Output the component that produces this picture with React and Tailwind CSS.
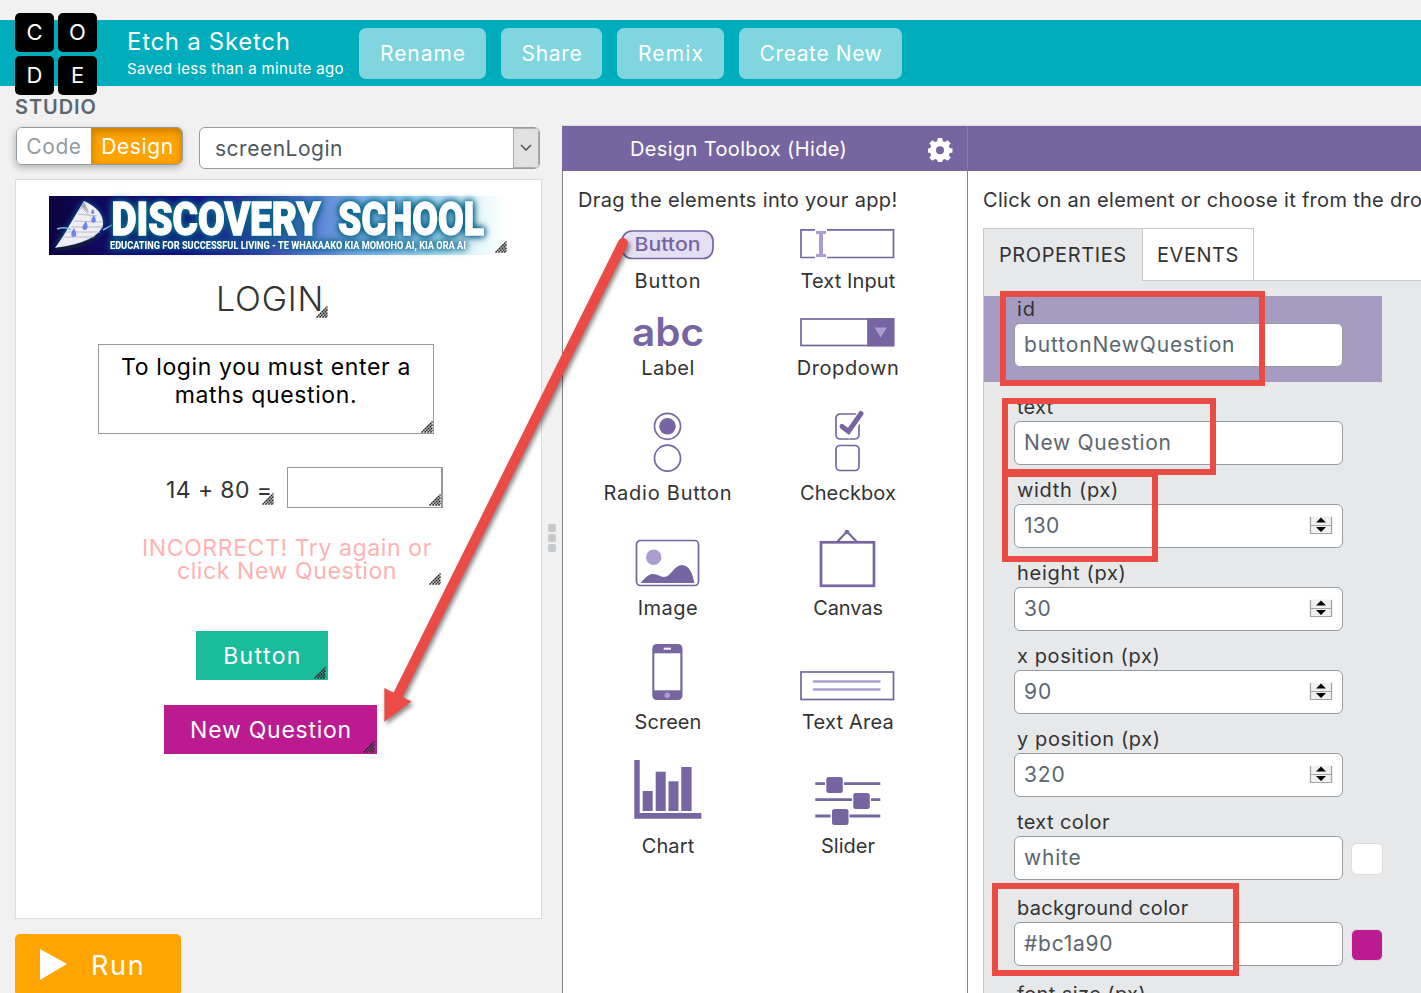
import React from "react";

const PURPLE = "#7665a0";
const LILAC = "#ab9dcf";

function Grip({ className }) {
  return (
    <svg className={"absolute " + className} width="12" height="12" viewBox="0 0 12 12">
      <path d="M12 0V12H0Z" fill="#999" opacity="0.25" />
      <path d="M0.5 11.5L11.5 0.5M3.5 11.5L11.5 3.5M6.5 11.5L11.5 6.5M9.3 11.5L11.5 9.3" stroke="#222" strokeWidth="1.5" strokeDasharray="1.9 0.5" />
    </svg>
  );
}

function Logo() {
  return (
    <div className="absolute left-[15px] top-[-7px] w-[82px]">
      <div className="grid grid-cols-2 gap-1 text-white text-[22px] leading-[39px] text-center">
        {["C", "O", "D", "E"].map((c) => (
          <div key={c} className="h-[39px] rounded-[5px] bg-black">{c}</div>
        ))}
      </div>
      <div className="mt-0.5 text-[20px] leading-5 font-semibold tracking-[0.9px] text-[#5b6770] whitespace-nowrap">STUDIO</div>
    </div>
  );
}

function HeaderButton({ className, children }) {
  return (
    <button className={"h-[51px] rounded-[7px] bg-[#80d6de] pl-px text-[21px] leading-[52px] text-white text-center whitespace-nowrap " + className}>
      {children}
    </button>
  );
}

function Header() {
  return (
    <header className="relative flex h-[66px] shrink-0 items-center gap-[15px] bg-[#00adbc] pl-[127px]">
      <Logo />
      <div className="w-[217px] pt-0.5 whitespace-nowrap text-white">
        <div className="text-[24px] leading-[30px] tracking-[0.7px]">Etch a Sketch</div>
        <div className="text-[15px] leading-6 tracking-[0.34px]">Saved less than a minute ago</div>
      </div>
      <HeaderButton className="w-[127px] tracking-[0.95px]">Rename</HeaderButton>
      <HeaderButton className="w-[101px] tracking-[0.7px]">Share</HeaderButton>
      <HeaderButton className="w-[107px] tracking-[1.1px]">Remix</HeaderButton>
      <HeaderButton className="w-[163px] tracking-[0.6px]">Create New</HeaderButton>
    </header>
  );
}

function Banner() {
  return (
    <svg className="absolute left-[33px] top-[16px] overflow-visible" width="458" height="59" viewBox="0 0 458 59">
      <defs>
        <linearGradient id="sky">
          <stop offset="0" stopColor="#0c0440" />
          <stop offset="0.14" stopColor="#120a68" />
          <stop offset="0.3" stopColor="#0f0a80" />
          <stop offset="0.45" stopColor="#3038a4" />
          <stop offset="0.58" stopColor="#5a80d4" />
          <stop offset="0.68" stopColor="#7fb4ec" />
          <stop offset="0.84" stopColor="#a5dcf2" />
          <stop offset="0.94" stopColor="#e8f8fc" />
          <stop offset="1" stopColor="#ffffff" />
        </linearGradient>
      </defs>
      <rect width="458" height="59" fill="url(#sky)" />
      <g className="drop-shadow-[0_0_3px_#0a7098]">
        <path d="M35 5Q55 14 54 29Q49 46 6 52Q16 38 20 30Z" fill="#eeeef4" />
      </g>
      <path d="M33 12L42 21M29 18L48 20M25 25L53 26M22 31L54 31M17 36L51 36M14 41L46 41" stroke="#bcbcc8" strokeWidth="1" />
      <path d="M35 5L29 17L33 11L40 17Z" fill="#a8a8b4" />
      <path d="M6 52Q36 50 51 37Q40 52 12 53.500Z" fill="#1a1a2a" />
      <path d="M8 33Q18 30 22 34M54 34L63 29" stroke="#70c0ea" strokeWidth="1.500" fill="none" />
      <path d="M25 32q-5 7-1 9q6 0 1-9M37 25q-6 7-2 9q6 0 2-9M45 19q-5 6-1 8q5-1 1-8M44 13q-3 3-1 5q4 0 1-5" fill="#6d83ee" />
      <g className="drop-shadow-[0_0_3px_#04587c]">
        <g className="drop-shadow-[0_0_3px_#0a6c94]" fill="#ffffff" stroke="#ffffff" fontFamily="Roboto, sans-serif" fontWeight="900">
          <text x="62.500" y="39" fontSize="47" strokeWidth="1.300" textLength="209" lengthAdjust="spacingAndGlyphs">DISCOVERY</text>
          <text x="289" y="39" fontSize="47" strokeWidth="1.300" textLength="146" lengthAdjust="spacingAndGlyphs">SCHOOL</text>
          <text x="61" y="53" fontSize="11" fontWeight="800" stroke="none" textLength="356" lengthAdjust="spacingAndGlyphs">EDUCATING FOR SUCCESSFUL LIVING - TE WHAKAAKO KIA MOMOHO AI, KIA ORA AI</text>
        </g>
      </g>
    </svg>
  );
}

function AppPreview() {
  return (
    <div className="relative mt-2.5 h-[740px] w-[527px] border border-[#ddd] bg-white text-[23px] whitespace-nowrap">
      <Banner />
      <Grip className="left-[479px] top-[61px]" />
      <div className="absolute left-[200px] top-[99px] text-[34px] leading-10 tracking-[0.8px] font-[350] text-[#333]">LOGIN</div>
      <Grip className="left-[300px] top-[126px]" />
      <div className="absolute left-[82px] top-[164px] h-[90px] w-[336px] border border-[#999] pt-[8px] text-center leading-7 text-black">
        <div className="tracking-[0.62px]">To login you must enter a</div>
        <div className="tracking-[0.62px]">maths question.</div>
        <Grip className="right-0 bottom-0" />
      </div>
      <div className="absolute left-[150px] top-[296px] leading-7 tracking-[0.4px] text-[#333]">14 + 80 =</div>
      <Grip className="left-[246px] top-[313px]" />
      <div className="absolute left-[271px] top-[287px] h-[41px] w-[156px] border border-r-2 border-[#999]">
        <Grip className="right-0 bottom-px" />
      </div>
      <div className="absolute left-[121px] top-[357px] w-[300px] text-center leading-[23px] text-[#ffb2b2]">
        <div className="tracking-[0.6px]">INCORRECT! Try again or</div>
        <div className="tracking-[0.6px]">click New Question</div>
      </div>
      <Grip className="left-[413px] top-[393px]" />
      <div className="absolute left-[180px] top-[451px] h-[49px] w-[132px] bg-[#1abc9c] pl-px text-center leading-[50px] tracking-[1.4px] text-white">
        Button
        <Grip className="right-0.5 bottom-px" />
      </div>
      <div className="absolute left-[148px] top-[525px] h-[49px] w-[213px] bg-[#bc1a90] pl-px text-center leading-[50px] tracking-[0.75px] text-white">
        New Question
        <Grip className="right-0.5 bottom-px" />
      </div>
    </div>
  );
}

function LeftColumn() {
  return (
    <section className="w-[542px] shrink-0 pl-[15px] pt-[41px]">
      <div className="flex h-[42px] items-start gap-4">
        <div className="ml-px flex h-[38px] w-[167px] rounded-md border border-[#949ca2] text-center text-[21px] leading-[38px] shadow-[-1px_3px_7px_rgba(0,0,0,0.25)]">
          <div className="h-9 w-[75px] rounded-l-[5px] border-r border-[#949ca2] bg-white tracking-[0.6px] text-[#949ca2]">Code</div>
          <div className="h-9 flex-1 rounded-r-[5px] bg-[#ffa400] pl-px tracking-[0.6px] text-white shadow-[inset_0_3px_8px_rgba(120,70,0,0.45)]">Design</div>
        </div>
        <div className="flex h-[42px] w-[341px] overflow-hidden rounded-md border border-[#949ca2] bg-white text-[21px] leading-[42px] tracking-[0.5px] text-[#4d575f]">
          <div className="flex-1 pl-[15px]">screenLogin</div>
          <div className="flex w-[26px] items-center justify-center border border-[#adadad] bg-[#e1e1e1]">
            <svg width="12" height="8" viewBox="0 0 12 8">
              <path d="M1 1L6 6L11 1" stroke="#444" strokeWidth="1.300" fill="none" />
            </svg>
          </div>
        </div>
      </div>
      <AppPreview />
      <div className="mt-[15px] flex h-[62px] w-[166px] items-center rounded-[5px] bg-[#ffa400] pl-6 text-[27px] tracking-[1.700px] text-white">
        <svg width="28" height="34" viewBox="0 0 28 34">
          <path d="M1 1L28 16L1 32Z" fill="#fff" />
        </svg>
        <span className="ml-6 pt-[3px]">Run</span>
      </div>
    </section>
  );
}

function Icon({ h, children }) {
  return (
    <svg className="overflow-visible" width="100" height={h} viewBox={"0 0 100 " + h} fill="none" stroke={PURPLE} strokeWidth="1.700">
      {children}
    </svg>
  );
}

const ICONS = {
  button: (
    <Icon h={40}>
      <rect x="4" y="4" width="91" height="27.500" rx="10" fill="#e5dff3" />
      <text x="16.500" y="24" fontSize="18.500" fontWeight="500" fill={PURPLE} stroke="none" textLength="66" lengthAdjust="spacingAndGlyphs">Button</text>
    </Icon>
  ),
  input: (
    <Icon h={40}>
      <path d="M17 2.800H3V30.500H17M29 2.800H95.500V30.500H29" />
      <path d="M18 5.500H28M18 28.500H28" stroke={LILAC} strokeWidth="3" />
      <path d="M23 5V29" stroke={LILAC} strokeWidth="4" />
    </Icon>
  ),
  label: (
    <Icon h={40}>
      <text x="14" y="32" fontSize="39" fontWeight="600" fill={PURPLE} stroke="none" textLength="72" lengthAdjust="spacingAndGlyphs">abc</text>
    </Icon>
  ),
  dropdown: (
    <Icon h={40}>
      <rect x="3" y="5" width="92.500" height="26.500" />
      <rect x="70" y="5" width="25.500" height="26.500" fill={PURPLE} />
      <path d="M76.500 13.500H89L82.700 23.500Z" fill={LILAC} stroke="none" />
    </Icon>
  ),
  radio: (
    <Icon h={70}>
      <circle cx="49.500" cy="17.300" r="13" />
      <circle cx="49.500" cy="17.300" r="8.300" fill={PURPLE} stroke="none" />
      <circle cx="49.500" cy="49.200" r="13" />
    </Icon>
  ),
  checkbox: (
    <Icon h={70}>
      <rect x="38" y="5" width="23" height="25" rx="4" />
      <path d="M44 17.500L50.500 23.500L63.500 4.500" stroke="#fff" strokeWidth="8.500" />
      <path d="M44 17.500L50.500 22.500L63 4.500" strokeWidth="5" strokeLinecap="round" />
      <rect x="38" y="36.500" width="23" height="25" rx="4" />
    </Icon>
  ),
  image: (
    <Icon h={60}>
      <rect x="18.500" y="6.500" width="62" height="45" rx="4" />
      <circle cx="35.700" cy="23.300" r="7.700" fill={LILAC} stroke="none" />
      <path d="M22.700 49C28 42 32 40 35 40C40 40 42 43 46 43C53 43 56 31 64 31C71 31 75 40 76.300 49Z" fill={PURPLE} stroke="none" />
    </Icon>
  ),
  canvas: (
    <Icon h={66}>
      <rect x="23" y="14.300" width="53" height="43.500" strokeWidth="2.700" />
      <path d="M39.500 13.500L49 3.500L58.500 13.500" strokeWidth="2.200" />
      <circle cx="49" cy="4" r="2.300" fill={PURPLE} stroke="none" />
    </Icon>
  ),
  screen: (
    <Icon h={66}>
      <rect x="34.300" y="2" width="30.200" height="56" rx="4.500" fill={PURPLE} stroke="none" />
      <rect x="36.300" y="11.300" width="26" height="37" fill="#fff" stroke="none" />
      <path d="M45.700 6.700H53" stroke="#fff" strokeWidth="2" />
      <circle cx="49.300" cy="53.300" r="2.800" fill={LILAC} stroke="none" />
    </Icon>
  ),
  textarea: (
    <Icon h={66}>
      <rect x="3" y="30" width="92.500" height="27.500" />
      <path d="M15 39.500H82.500M15 47.500H82.500" stroke={LILAC} strokeWidth="2.700" />
    </Icon>
  ),
  chart: (
    <Icon h={74}>
      <g fill={PURPLE} stroke="none">
        <path d="M16.300 2H21.700V55H83.300V60.700H16.300Z" />
        <rect x="24.700" y="33" width="10" height="20" />
        <rect x="37.700" y="13.700" width="10" height="39.300" />
        <rect x="50.500" y="23.300" width="10" height="29.700" />
        <rect x="63.300" y="9" width="10.300" height="44" />
      </g>
    </Icon>
  ),
  slider: (
    <Icon h={74}>
      <path d="M17.300 25.700H27M46 25.700H82.300M17.300 41.700H54M73 41.700H82.300M17.300 58H32.500M51.500 58H82.300" strokeWidth="2.800" />
      <g fill={PURPLE} stroke="none">
        <rect x="28.300" y="19" width="16.500" height="16" rx="2.500" />
        <rect x="55.300" y="35" width="16.500" height="16" rx="2.500" />
        <rect x="34" y="51" width="16.500" height="16" rx="2.500" />
      </g>
    </Icon>
  ),
};

const TOOLS = [
  ["Button", "button", "tracking-[1px]"],
  ["Text Input", "input", "tracking-[0.1px]"],
  ["Label", "label", "tracking-[0.4px]"],
  ["Dropdown", "dropdown", "tracking-[0.6px]"],
  ["Radio Button", "radio", "tracking-[0.75px]"],
  ["Checkbox", "checkbox", "tracking-[0.1px]"],
  ["Image", "image", "tracking-[0.5px]"],
  ["Canvas", "canvas", "tracking-[-0.1px]"],
  ["Screen", "screen", "tracking-[0.05px]"],
  ["Text Area", "textarea", "tracking-[0.2px]"],
  ["Chart", "chart", "tracking-[0.1px]"],
  ["Slider", "slider", "tracking-normal"],
];

function Toolbox() {
  return (
    <section className="w-[405px] shrink-0 border-l border-[#7f8488] bg-white text-[20px] text-[#333]">
      <div className="-ml-px flex h-[45px] items-center bg-[#7665a0] pl-[68px] pr-[14px] text-white">
        <div className="flex-1 pt-0.5 whitespace-nowrap tracking-[0.36px] leading-[45px]">Design Toolbox (Hide)</div>
        <svg width="26" height="26" viewBox="0 0 26 26" className="mt-0.5">
          <path fillRule="evenodd" fill="#fff" d="M10.8 1H15.200L15.800 4.200L17.900 5.100L20.600 3.200L23.700 6.300L21.800 9L22.700 11L25.500 11.500V15.500L22.700 16L21.800 18L23.700 20.700L20.600 23.800L17.900 21.900L15.800 22.700L15.200 25H10.800L10.200 22.700L8.100 21.900L5.400 23.800L2.300 20.700L4.200 18L3.300 16L1 15.500V11.500L3.300 11L4.200 9L2.300 6.300L5.400 3.200L8.100 5.100L10.200 4.200ZM13 9.200A4 4 0 1 0 13 17.200A4 4 0 1 0 13 9.200Z" />
        </svg>
      </div>
      <p className="mt-[14px] mb-px pl-[15px] leading-[30px] tracking-[0.35px] whitespace-nowrap">Drag the elements into your app!</p>
      <div className="grid w-[360px] ml-[15px] grid-cols-2 grid-rows-[79px_87px_125px_115px_114px_124px]">
        {TOOLS.map(([name, icon, tracking]) => (
          <div key={name} className="flex flex-col items-center justify-end">
            {ICONS[icon]}
            <span className={"leading-7 whitespace-nowrap " + tracking}>{name}</span>
          </div>
        ))}
      </div>
    </section>
  );
}

function Spinner() {
  return (
    <svg width="24" height="19" viewBox="0 0 24 19" className="mr-[9px] mb-0.5">
      <rect x="0.500" y="0.500" width="23" height="17" fill="#f0f0f0" />
      <path d="M1.500 1V17.500H22.500V1M1.500 9.500H22.500" stroke="#a3a3a3" fill="none" strokeWidth="1.200" />
      <path d="M7 6.500L12 1.500L17 6.500ZM7 11H17L12 16Z" fill="#000" />
    </svg>
  );
}

function Field({ label, value, lt, vt, spinner, swatch, className = "mt-[11px]" }) {
  return (
    <div className={className}>
      <div className={"pl-[33px] leading-[28px] whitespace-nowrap " + lt}>{label}</div>
      <div className="flex items-center">
        <div className="ml-[30px] flex h-11 w-[329px] items-center justify-between rounded-[6px] border border-[#949ca2] bg-white pl-[9px] text-[21px] leading-[42px] text-[#5b6770]">
          <span className={vt}>{value}</span>
          {spinner && <Spinner />}
        </div>
        {swatch && <div className={"mt-px ml-2 size-8 rounded-[6px] border border-[#ddd] " + swatch} />}
      </div>
    </div>
  );
}

function Properties() {
  return (
    <section className="min-w-0 flex-1 overflow-hidden border-l border-[#7f8488] bg-white text-[20px] text-[#333]">
      <div className="h-[45px] bg-[#7665a0]" />
      <p className="mt-[14px] pl-[15px] leading-[30px] tracking-[0.3px] whitespace-nowrap">Click on an element or choose it from the dropdown list.</p>
      <div className="mt-[13px] ml-[15px] flex h-[53px] leading-[53px]">
        <div className="w-[159px] border-l border-t border-[#c6cacd] bg-[#e7e8ea] pl-[15px] tracking-[0.6px]">PROPERTIES</div>
        <div className="w-[112px] border border-[#c6cacd] pl-[14px] tracking-[0.55px]">EVENTS</div>
        <div className="flex-1 border-b border-[#c6cacd]" />
      </div>
      <div className="ml-[15px] h-[720px] border-l border-[#c6cacd] bg-[#e7e8ea] pt-[15px]">
        <div className="h-[86px] w-[398px] bg-[#a69bc1]">
          <Field className="relative -top-px" label="id" value="buttonNewQuestion" lt="tracking-[1px]" vt="tracking-[0.85px]" />
        </div>
        <Field label="text" value="New Question" lt="tracking-[0.2px]" vt="tracking-[0.68px]" />
        <Field label="width (px)" value="130" lt="tracking-[0.7px]" vt="tracking-[0.24px]" spinner />
        <Field label="height (px)" value="30" lt="tracking-[0.7px]" vt="tracking-[0.5px]" spinner />
        <Field label="x position (px)" value="90" lt="tracking-[0.6px]" vt="tracking-[0.9px]" spinner />
        <Field label="y position (px)" value="320" lt="tracking-[0.6px]" vt="tracking-[0.9px]" spinner />
        <Field label="text color" value="white" lt="tracking-[0.4px]" vt="tracking-[0.8px]" swatch="bg-white" />
        <Field className="mt-[14px]" label="background color" value="#bc1a90" lt="tracking-[0.32px]" vt="tracking-[0.75px]" swatch="bg-[#bc1a90]" />
        <Field label="font size (px)" value="14" lt="tracking-[0.4px]" vt="tracking-[0.5px]" spinner className="mt-[14px]" />
      </div>
    </section>
  );
}

function Annotations() {
  return (
    <>
      <svg className="absolute left-0 top-0 pointer-events-none" width="1421" height="993" viewBox="0 0 1421 993">
        <g className="drop-shadow-[2px_3px_2px_rgba(0,0,0,0.45)]">
          <path d="M623 243L398 695" stroke="#ea4b44" strokeWidth="10" strokeLinecap="round" />
          <path d="M384.300 688L411.500 701.500L384.300 721.800Z" fill="#ea4b44" />
        </g>
      </svg>
      <div className="absolute left-[1000px] top-[291px] h-[95px] w-[265px] border-6 border-[#ea4b44]" />
      <div className="absolute left-[1002px] top-[398px] h-[77px] w-[214px] border-6 border-[#ea4b44]" />
      <div className="absolute left-[1002px] top-[471px] h-[91px] w-[156px] border-6 border-[#ea4b44]" />
      <div className="absolute left-[992px] top-[883px] h-[93px] w-[247px] border-6 border-[#ea4b44]" />
    </>
  );
}

export default function App() {
  return (
    <div className="relative flex h-[993px] w-[1421px] flex-col overflow-hidden bg-[#f1f1f1] pt-5 font-['Inter',sans-serif]">
      <Header />
      <main className="flex min-h-0 flex-1">
        <LeftColumn />
        <div className="flex w-5 shrink-0 flex-col items-center gap-[2px] pt-[438px]">
          <div className="size-2 rounded-[2px] bg-[#c6cacd]" />
          <div className="size-2 rounded-[2px] bg-[#c6cacd]" />
          <div className="size-2 rounded-[2px] bg-[#c6cacd]" />
        </div>
        <div className="mt-[39px] flex min-w-0 flex-1 border-t border-[#ddd]">
          <Toolbox />
          <Properties />
        </div>
      </main>
      <Annotations />
    </div>
  );
}
